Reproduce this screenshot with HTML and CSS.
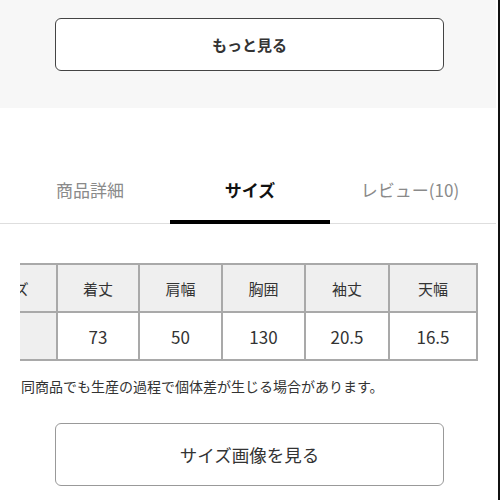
FILE: index.html
```html
<!DOCTYPE html>
<html lang="ja">
<head>
<meta charset="utf-8">
<link rel="stylesheet" href="styles.css">
</head>
<body>
<div class="page">
  <section class="top">
    <button class="more-btn">もっと見る</button>
  </section>
  <nav class="tabs">
    <div class="tab">商品詳細</div>
    <div class="tab active">サイズ</div>
    <div class="tab">レビュー(10)</div>
  </nav>
  <div class="table-wrap">
    <table class="size-table">
      <colgroup>
        <col class="c0"><col class="c1"><col class="c2"><col class="c3"><col class="c4"><col class="c5">
      </colgroup>
      <thead>
        <tr><th>サイズ</th><th>着丈</th><th>肩幅</th><th>胸囲</th><th>袖丈</th><th>天幅</th></tr>
      </thead>
      <tbody>
        <tr><th class="rowhead"></th><td>73</td><td>50</td><td>130</td><td>20.5</td><td>16.5</td></tr>
      </tbody>
    </table>
  </div>
  <p class="note">同商品でも生産の過程で個体差が生じる場合があります。</p>
  <button class="image-btn">サイズ画像を見る</button>
</div>
</body>
</html>
```
FILE: styles.css
```css
html, body {
  margin: 0;
  padding: 0;
  background: #fff;
}
body {
  font-family: "Noto Sans CJK JP", "Noto Sans", sans-serif;
  color: #333;
}
.page {
  width: 496px;
  height: 500px;
  padding-right: 2px;
  border-right: 2px solid #111;
  overflow: hidden;
}
.top {
  background: #f7f7f7;
  height: 108px;
  padding-top: 18px;
  box-sizing: border-box;
}
.more-btn {
  display: block;
  margin-left: 55px;
  width: 389px;
  height: 53px;
  box-sizing: border-box;
  background: #fff;
  border: 1.5px solid #444;
  border-radius: 6px;
  font-family: inherit;
  font-size: 15px;
  font-weight: 700;
  color: #333;
  padding: 0;
}
.tabs {
  margin-top: 52px;
  padding-left: 10px;
  display: flex;
  border-bottom: 1px solid #dedede;
}
.tab {
  width: 160px;
  padding: 18px 0;
  line-height: 24px;
  font-size: 17px;
  text-align: center;
  color: #8a8a8a;
  border-bottom: 4px solid transparent;
  margin-bottom: -1px;
}
.tab.active {
  color: #111;
  font-weight: 700;
  border-bottom-color: #000;
}
.table-wrap {
  margin-top: 39px;
  margin-left: 20px;
  width: 460px;
  overflow: hidden;
}
.size-table {
  margin-left: -65px;
  border-collapse: collapse;
  table-layout: fixed;
  width: 521px;
}
.c0 { width: 101px; }
.c1 { width: 82px; }
.c2 { width: 83px; }
.c3 { width: 83px; }
.c4 { width: 84px; }
.c5 { width: 88px; }
.size-table th,
.size-table td {
  border: 2px solid #a9a9a9;
  height: 46px;
  padding: 0;
  text-align: center;
  vertical-align: middle;
  white-space: nowrap;
}
.size-table thead th {
  background: #efefef;
  font-weight: 400;
  font-size: 15px;
  color: #333;
}
.size-table .rowhead {
  background: #efefef;
}
.size-table td {
  font-size: 17px;
  color: #333;
  background: #fff;
}
.note {
  margin: 15px 0 0 21px;
  font-size: 14px;
  line-height: 20px;
  color: #333;
}
.image-btn {
  display: block;
  margin: 27px 0 0 55px;
  width: 389px;
  height: 63px;
  box-sizing: border-box;
  background: #fff;
  border: 1px solid #999;
  border-radius: 6px;
  font-family: inherit;
  font-size: 17.5px;
  color: #333;
  padding: 0;
}
```
